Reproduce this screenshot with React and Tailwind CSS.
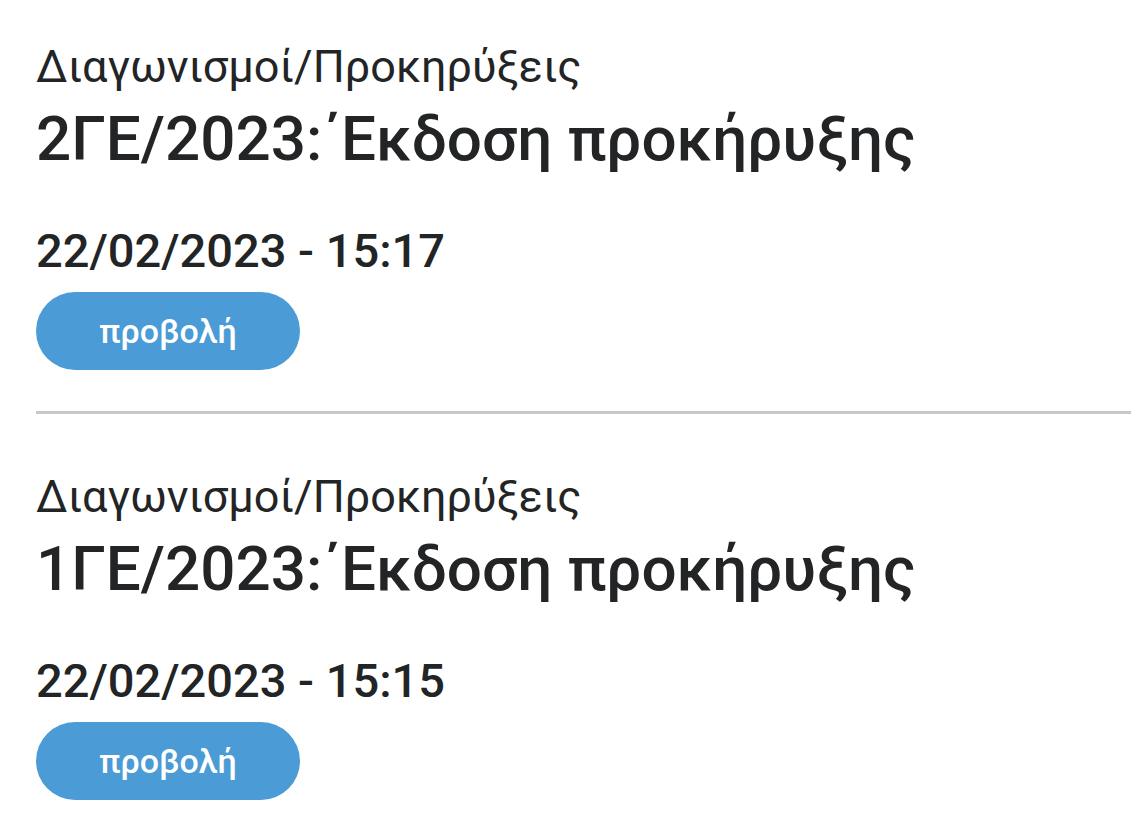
import React from 'react';

const items = [
  { category: 'Διαγωνισμοί/Προκηρύξεις', title: '2ΓΕ/2023:΄Εκδοση προκήρυξης', date: '22/02/2023 - 15:17' },
  { category: 'Διαγωνισμοί/Προκηρύξεις', title: '1ΓΕ/2023:΄Εκδοση προκήρυξης', date: '22/02/2023 - 15:15' },
];

export default function App() {
  return (
    <div className="min-h-screen bg-white text-[#222426] font-['Roboto',sans-serif] pl-[36px] pt-[39px]">
      {items.map((item, i) => (
        <div key={i}>
          {i > 0 && <div className="h-[3px] bg-[#c8c8c8] mt-[41px] mb-[55px]" />}
          <div className="text-[45px] leading-[56px]">{item.category}</div>
          <div className="mt-[4px] text-[62px] leading-[80px] font-medium">{item.title}</div>
          <div className="mt-[42px] text-[47px] leading-[60px] font-medium">{item.date}</div>
          <button className="mt-[11px] w-[264px] h-[78px] rounded-full bg-[#4a9bd6] text-white text-[34px] font-medium">
            προβολή
          </button>
        </div>
      ))}
    </div>
  );
}
